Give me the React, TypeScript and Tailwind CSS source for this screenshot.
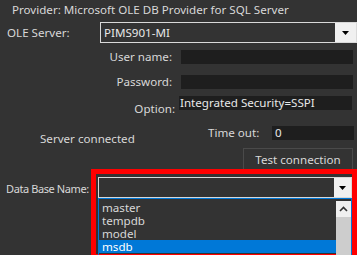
import React from "react";

function Caret() {
  return (
    <svg width="7" height="4" viewBox="0 0 7 4">
      <path d="M0 0h7L3.5 4z" fill="#000" />
    </svg>
  );
}

export default function App() {
  const items = ["master", "tempdb", "model", "msdb"];
  return (
    <div
      className="w-[357px] h-[255px] overflow-hidden bg-[#333333] text-[#d8d8d8] text-[11.6px] leading-[14px] whitespace-nowrap"
      style={{ fontFamily: '"Noto Sans", sans-serif' }}
    >
      {/* provider */}
      <div className="pl-[12px] pt-[3px] h-[22px]">Provider: Microsoft OLE DB Provider for SQL Server</div>

      {/* OLE server */}
      <div className="flex items-center h-[21px]">
        <div className="w-[100px] pl-[7px]">OLE Server:</div>
        <div className="flex flex-1 h-[21px] border border-[#d9d9d9] bg-[#333333]">
          <div className="flex-1 pl-[3px] flex items-center text-[#e8e8e8]">PIMS901-MI</div>
          <div className="w-[21px] bg-[#f0f0f0] flex items-center justify-center">
            <Caret />
          </div>
        </div>
      </div>

      {/* user name */}
      <div className="flex items-center mt-[7px] h-[14px]">
        <div className="w-[172px] text-right">User name:</div>
        <div className="ml-[9px] w-[172px] h-[14px] bg-[#1e1e1e]" />
      </div>

      {/* password */}
      <div className="flex items-center mt-[11px] h-[14px]">
        <div className="w-[172px] text-right">Password:</div>
        <div className="ml-[9px] w-[172px] h-[14px] bg-[#1e1e1e]" />
      </div>

      {/* option */}
      <div className="flex items-start mt-[7px] h-[16px]">
        <div className="w-[175px] text-right pt-[6px]">Option:</div>
        <div className="ml-[4px] w-[173px] h-[14px] bg-[#1e1e1e] pl-[1px] text-[#e8e8e8]">Integrated Security=SSPI</div>
      </div>

      {/* time out */}
      <div className="flex items-start mt-[14px] h-[22px]">
        <div className="w-[208px] pl-[40px] pt-[6px]">Server connected</div>
        <div className="w-[64px]">Time out:</div>
        <div className="w-[82px] h-[14px] bg-[#1e1e1e] pl-[3px] text-[#e8e8e8]">0</div>
      </div>

      {/* test button */}
      <div className="flex h-[21px]">
        <div className="ml-[243px] w-[110px] h-[23px] border border-[#4a4a4a] bg-[#333333] flex items-center justify-center">
          Test connection
        </div>
      </div>

      {/* database name */}
      <div className="flex items-start">
        <div className="w-[91px] pl-[6px] pt-[13px] text-[11px] tracking-[-0.4px]">Data Base Name:</div>
        <div className="w-[266px] h-[90px] border-[5px] border-[#ff0000] pl-[2px] pt-[3px] bg-[#333333]">
          <div className="flex h-[21px] w-[254px] border border-[#d9d9d9]">
            <div className="flex-1" />
            <div className="w-[17px] bg-[#f0f0f0] flex items-center justify-center">
              <Caret />
            </div>
          </div>
          <div className="flex w-[254px] h-[60px] border border-[#0078d7] pt-[2px]">
            <div className="flex-1 flex flex-col">
              {items.map((it) => (
                <div
                  key={it}
                  className={
                    it === "msdb"
                      ? "h-[13px] leading-[13px] pl-[3px] bg-[#0078d7] text-white"
                      : "h-[13px] leading-[13px] pl-[3px]"
                  }
                >
                  {it}
                </div>
              ))}
            </div>
            <div className="w-[15px] flex flex-col">
              <div className="h-[16px] bg-[#f0f0f0] flex items-center justify-center">
                <svg width="9" height="6" viewBox="0 0 9 6">
                  <path d="M1 5L4.5 1.5L8 5" stroke="#333" strokeWidth="1.6" fill="none" />
                </svg>
              </div>
              <div className="flex-1 bg-[#cdcdcd]" />
            </div>
          </div>
        </div>
      </div>
    </div>
  );
}
